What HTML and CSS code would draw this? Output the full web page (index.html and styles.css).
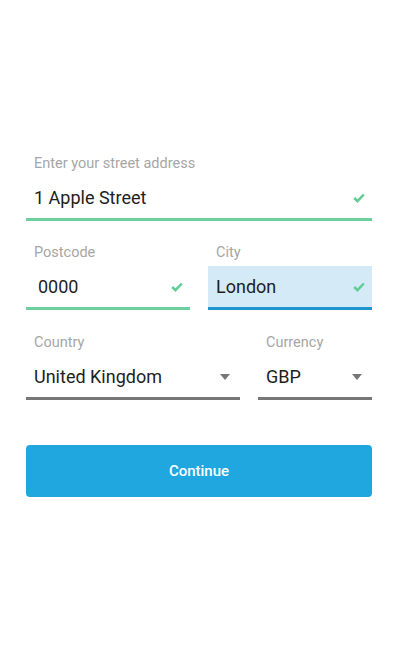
FILE: index.html
```html
<!DOCTYPE html>
<html>
<head>
<meta charset="utf-8">
<link rel="stylesheet" href="styles.css">
</head>
<body>
<form class="form">
  <div class="row">
    <div class="field full">
      <div class="label">Enter your street address</div>
      <div class="box valid">
        <span class="value">1 Apple Street</span>
        <svg class="check" width="12" height="10" viewBox="0 0 12 10"><polyline points="1.2,5 4.5,8.2 10.8,1.5" fill="none" stroke="#5fcd94" stroke-width="2.5"/></svg>
      </div>
    </div>
  </div>
  <div class="row">
    <div class="field half">
      <div class="label">Postcode</div>
      <div class="box valid inset">
        <span class="value">0000</span>
        <svg class="check" width="12" height="10" viewBox="0 0 12 10"><polyline points="1.2,5 4.5,8.2 10.8,1.5" fill="none" stroke="#5fcd94" stroke-width="2.5"/></svg>
      </div>
    </div>
    <div class="field half">
      <div class="label">City</div>
      <div class="box focus">
        <span class="value">London</span>
        <svg class="check" width="12" height="10" viewBox="0 0 12 10"><polyline points="1.2,5 4.5,8.2 10.8,1.5" fill="none" stroke="#5fcd94" stroke-width="2.5"/></svg>
      </div>
    </div>
  </div>
  <div class="row last">
    <div class="field country">
      <div class="label">Country</div>
      <div class="box select">
        <span class="value">United Kingdom</span>
        <span class="caret"></span>
      </div>
    </div>
    <div class="field currency">
      <div class="label">Currency</div>
      <div class="box select">
        <span class="value">GBP</span>
        <span class="caret"></span>
      </div>
    </div>
  </div>
  <button type="button" class="continue">Continue</button>
</form>
</body>
</html>
```

FILE: styles.css
```css
html, body {
  margin: 0;
  padding: 0;
  background: #ffffff;
}
body {
  font-family: Roboto, "Liberation Sans", sans-serif;
}
.form {
  width: 346px;
  padding: 156px 0 0 26px;
  display: flex;
  flex-direction: column;
  gap: 24px;
}
.row {
  display: flex;
  gap: 18px;
}
.row.last { margin-top: 1px; }
.field {
  display: flex;
  flex-direction: column;
}
.full { width: 346px; }
.half { width: 164px; }
.country { width: 214px; }
.currency { width: 114px; }
.label {
  font-size: 14.5px;
  line-height: 16px;
  color: #a6a6a6;
  padding-left: 8px;
  margin-bottom: 5px;
}
.box {
  height: 44px;
  box-sizing: border-box;
  border-bottom: 3px solid #777777;
  display: flex;
  align-items: center;
  justify-content: space-between;
  padding: 0 7px 0 8px;
}
.inset { padding-left: 12px; }
.valid { border-bottom-color: #6ccf9d; }
.focus {
  background: #d4ebf7;
  border-bottom-color: #1e95cf;
}
.select { padding-right: 10px; }
.value {
  font-size: 18px;
  color: #1e1e1e;
}
.check { display: block; }
.caret {
  width: 0;
  height: 0;
  border-left: 5.5px solid transparent;
  border-right: 5.5px solid transparent;
  border-top: 6px solid #767676;
}
.continue {
  margin-top: 21px;
  height: 52px;
  width: 346px;
  border: none;
  border-radius: 4px;
  background: #21a7e0;
  color: #ffffff;
  font-family: Roboto, "Liberation Sans", sans-serif;
  font-size: 15px;
  font-weight: 500;
}
```
